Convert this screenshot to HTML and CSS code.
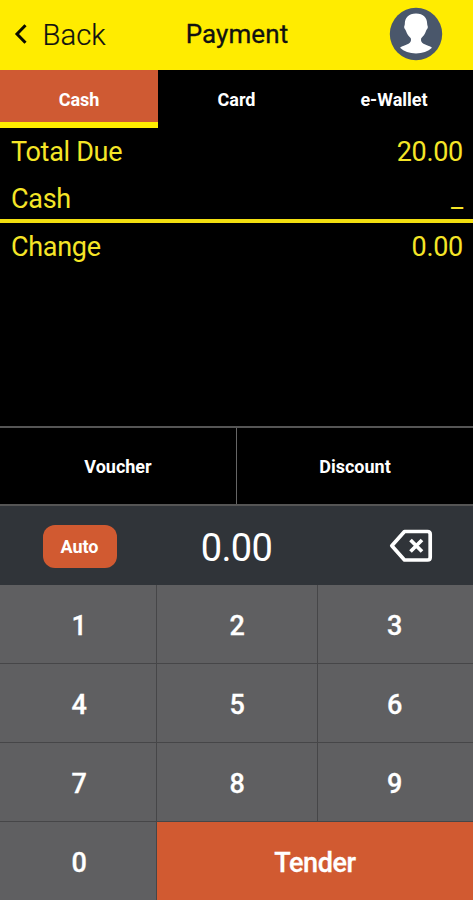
FILE: index.html
```html
<!DOCTYPE html>
<html lang="en">
<head>
    <meta charset="UTF-8">
    <meta name="viewport" content="width=device-width, initial-scale=1.0">
    <title>Payment</title>
    <link rel="stylesheet" href="styles.css">
</head>
<body>
    <div class="mainContainer">
        <header class="header">
            <div class="backLink">
                <svg class="backIcon" width="14" height="22" viewBox="0 0 14 22"><path d="M12.500 2.200L4 11l8.500 8.800"/></svg>
                <span class="backText">Back</span>
            </div>
            <h1 class="title">Payment</h1>
            <div class="avatarBox">
                <svg class="avatar" width="54" height="54" viewBox="0 0 54 54">
                    <circle cx="27" cy="27" r="26.2" fill="#4a576b"/>
                    <path fill="#fff" d="M27 6.500C19.500 6.500 15.800 11 15.800 17C15.800 18.500 15 19 15.200 20.500C15.500 22.300 16.500 22.300 17 24C18 27.500 20 29.500 21.800 31.200C22.500 34 21.500 35.500 19.500 36.800C16.500 38.500 13 38.800 11 40.700C15 44.600 20.500 46.400 27 46.400S39 44.600 43 40.700C41 38.800 37.500 38.500 34.500 36.800C32.500 35.500 31.500 34 32.200 31.200C34 29.500 36 27.500 37 24C37.500 22.300 38.500 22.300 38.800 20.500C39 19 38.200 18.500 38.200 17C38.200 11 34.500 6.500 27 6.500z"/>
                </svg>
            </div>
        </header>
        <nav class="tabs">
            <div class="tab active">Cash</div>
            <div class="tab">Card</div>
            <div class="tab">e-Wallet</div>
        </nav>
        <section class="summary">
            <div class="row totalRow"><span>Total Due</span><span>20.00</span></div>
            <div class="row cashRow"><span>Cash</span><span class="cursor">_</span></div>
            <div class="row changeRow"><span>Change</span><span>0.00</span></div>
        </section>
        <div class="options">
            <div class="option">Voucher</div>
            <div class="option">Discount</div>
        </div>
        <div class="entry">
            <div class="entryCell"><button class="btnAuto">Auto</button></div>
            <div class="entryCell amount">0.00</div>
            <div class="entryCell">
                <svg class="deleteIcon" width="44" height="34" viewBox="0 0 44 34">
                    <path d="M15.500 2.500H38.500Q41.200 2.500 41.200 5.200V28.300Q41.200 31 38.500 31H15.500L2.800 16.750z"/>
                    <path d="M21.500 11L33 22.500M33 11L21.500 22.500"/>
                </svg>
            </div>
        </div>
        <div class="keypad">
            <button class="key">1</button>
            <button class="key">2</button>
            <button class="key">3</button>
            <button class="key">4</button>
            <button class="key">5</button>
            <button class="key">6</button>
            <button class="key">7</button>
            <button class="key">8</button>
            <button class="key">9</button>
            <button class="key">0</button>
            <button class="key tender">Tender</button>
        </div>
    </div>
</body>
</html>
```
FILE: styles.css
```css
*{margin: 0;padding: 0;box-sizing: border-box;}
body{font-family: Roboto, "Liberation Sans", sans-serif;background-color: #000;color: #fff;}
button{font-family: inherit;color: inherit;border: none;outline: none;}
.mainContainer{width: 100%;height: 100vh;display: flex;flex-direction: column;overflow: hidden;}

.header{height: 70px;flex: none;display: grid;grid-template-columns: 1fr 1fr 1fr;align-items: center;background-color: #ffec00;color: #111;}
.backLink{display: flex;align-items: center;padding-left: 13px;}
.backIcon{fill: none;stroke: #0b0b00;stroke-width: 3;margin-top: -2px;}
.backText{font-size: 29.3px;font-weight: 300;line-height: 34px;margin-left: 15.5px;-webkit-text-stroke: 0.2px #111;}
.title{font-size: 26px;font-weight: 400;text-align: center;line-height: 30px;letter-spacing: 0.1px;padding-left: 1px;margin-top: -2px;-webkit-text-stroke: 0.3px #111;}
.avatarBox{display: flex;justify-content: center;padding-left: 43px;}
.avatar{display: block;margin-top: -3px;}

.tabs{height: 58px;flex: none;display: grid;grid-template-columns: 158px 1fr 158px;}
.tab{display: flex;align-items: center;justify-content: center;font-size: 18px;font-weight: 700;padding-top: 1px;}
.tab.active{background-color: #cf5a33;border-bottom: 6px solid #ffec00;padding-top: 7px;}

.summary{flex: none;height: 298px;color: #f5e527;font-size: 27px;letter-spacing: -0.3px;}
.row{display: flex;justify-content: space-between;padding: 0 10px 0 11px;line-height: 49px;}
.totalRow{height: 48px;}
.cashRow{height: 47px;line-height: 46px;border-bottom: 4px solid #f2df10;}
.changeRow{height: 48px;}
.cursor{margin-top: -1px;}

.options{height: 80px;flex: none;display: grid;grid-template-columns: 236px 1fr;border-top: 2px solid #555;border-bottom: 2px solid #555;}
.option{display: flex;align-items: center;justify-content: center;font-size: 18px;font-weight: 700;}
.option + .option{border-left: 1px solid #666;}

.entry{height: 79px;flex: none;display: grid;grid-template-columns: 158px 1fr 158px;background-color: #303439;}
.entryCell{display: flex;align-items: center;justify-content: center;padding-top: 1px;}
.btnAuto{width: 74px;height: 43px;border-radius: 12px;background-color: #d15a31;font-size: 18px;font-weight: 700;margin-left: 1px;}
.amount{font-size: 38px;letter-spacing: -0.7px;padding-top: 4px;}
.deleteIcon{fill: none;stroke: #fff;stroke-width: 3.7;stroke-linejoin: round;margin-left: 33px;}

.keypad{flex: 1;display: grid;grid-template-columns: 157px 161px 155px;grid-template-rows: 79px 79px 79px 1fr;background-color: #5f5f61;}
.key{background-color: #5f5f61;font-size: 27px;font-weight: 500;letter-spacing: -0.4px;padding: 3px 0 0 2px;border-right: 1px solid #464648;border-bottom: 1px solid #464648;-webkit-text-stroke: 0.3px #fff;}
.key:nth-child(3n){border-right: none;padding: 3px 2px 0 0;}
.key:nth-child(3n+2){padding-left: 0;}
.key:nth-child(n+10){border-bottom: none;}
.tender{grid-column: span 2;background-color: #d15a31;border: none;}
```
